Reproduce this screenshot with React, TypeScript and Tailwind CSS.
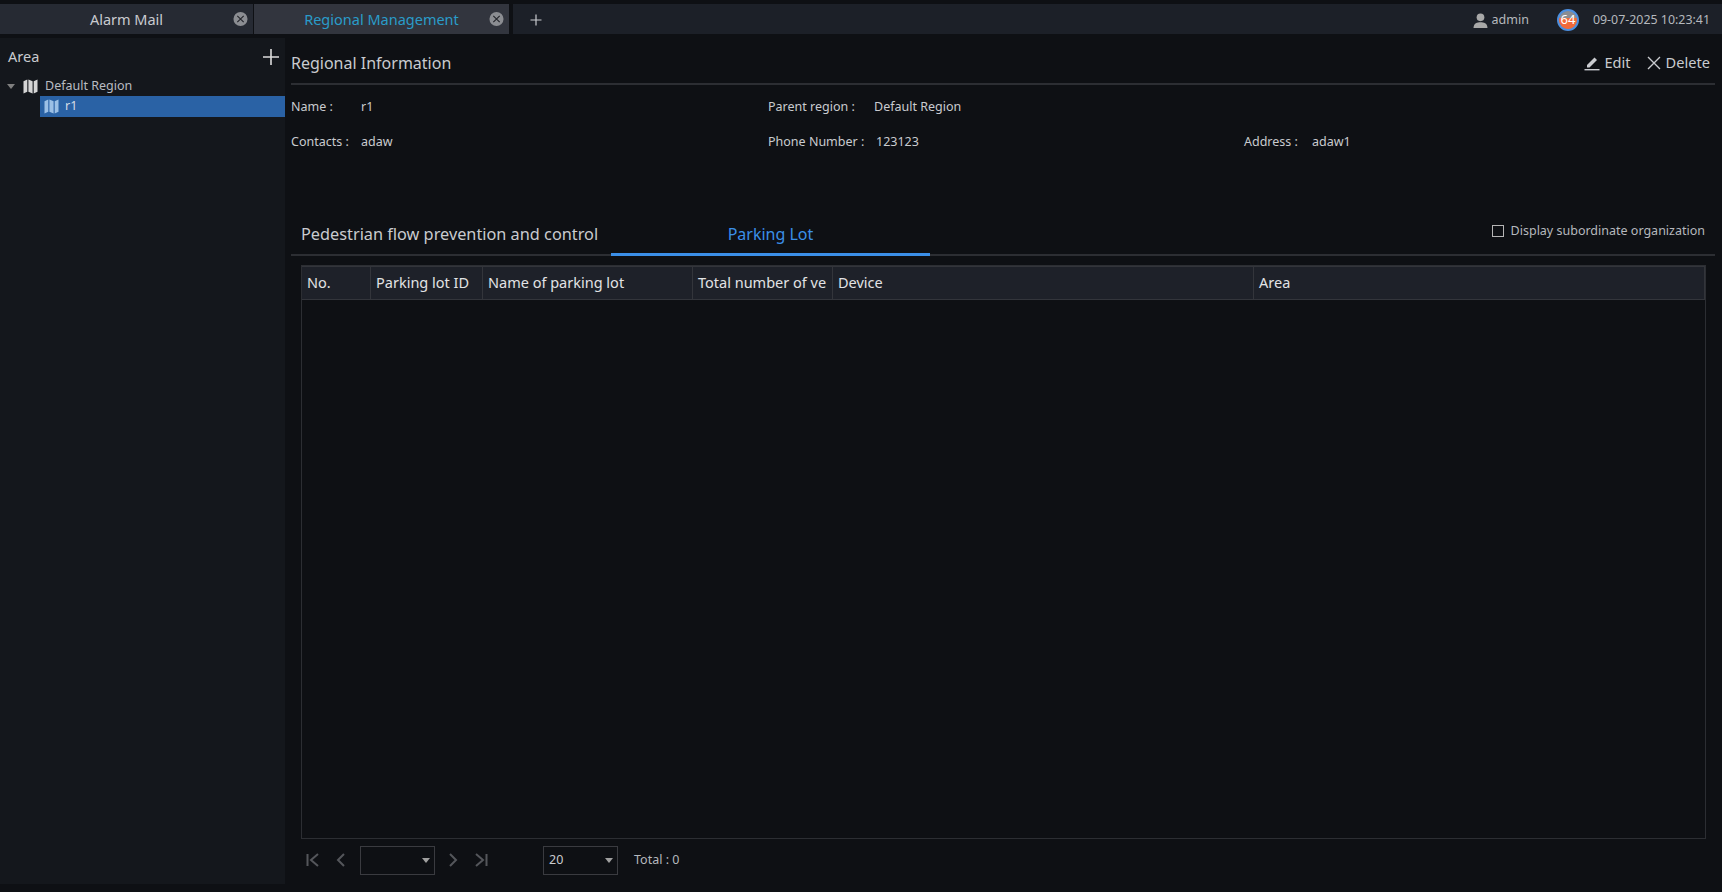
import React from 'react';

const MapIcon = ({ className }: { className?: string }) => (
  <svg viewBox="0 0 15 15" className={className} fill="currentColor">
    <path d="M0.5 2.2 L4.3 0.6 V12.8 L0.5 14.4 Z" />
    <path d="M5.4 0.6 L9.6 2.2 V14.4 L5.4 12.8 Z" />
    <path d="M10.7 2.2 L14.5 0.6 V12.8 L10.7 14.4 Z" />
  </svg>
);

const CloseBadge = () => (
  <svg viewBox="0 0 16 16" className="absolute right-[5px] top-1/2 -translate-y-1/2 w-[15px] h-[15px]">
    <circle cx="8" cy="8" r="7.5" fill="#8b8d92" />
    <path d="M4.6 4.6 L11.4 11.4 M11.4 4.6 L4.6 11.4" stroke="#26282e" strokeWidth="1.3" />
  </svg>
);

const Caret = ({ fill = '#a0a0a0' }: { fill?: string }) => (
  <svg viewBox="0 0 8 5" className="w-2 h-[5px]" fill={fill}>
    <path d="M0 0 H8 L4 5 Z" />
  </svg>
);

const Pager = ({ d }: { d: string }) => (
  <svg viewBox="0 0 16 16" className="w-4 h-4" fill="none" stroke="#54565b" strokeWidth="2">
    <path d={d} />
  </svg>
);

const columns = [
  { label: 'No.', width: 'w-[69px]' },
  { label: 'Parking lot ID', width: 'w-[112px]' },
  { label: 'Name of parking lot', width: 'w-[210px]' },
  { label: 'Total number of ve', width: 'w-[140px]' },
  { label: 'Device', width: 'w-[421px]' },
  { label: 'Area', width: 'flex-1' },
];

const App: React.FC = () => {
  return (
    <div className="w-[1722px] h-[892px] overflow-hidden bg-[#0e1014] flex flex-col text-[#c9cbcf] font-['Noto_Sans','Open_Sans',sans-serif] text-[12.5px]">
      {/* Tab bar */}
      <div className="h-[30px] mt-[4px] bg-[#1c2028] flex items-stretch shrink-0">
        <div className="relative w-[253px] bg-[#262a33] flex items-center justify-center pt-[2px]">
          <span className="text-[14.5px] text-[#c9cbcf]">Alarm Mail</span>
          <CloseBadge />
        </div>
        <div className="w-[1px] bg-[#0e1014]" />
        <div className="relative w-[255px] bg-[#32353e] flex items-center justify-center pt-[2px]">
          <span className="text-[14.5px] text-[#2a9cc9]">Regional Management</span>
          <CloseBadge />
        </div>
        <div className="w-[4px] bg-[#0e1014]" />
        <div className="w-[46px] flex items-center justify-center pt-[2px]">
          <svg viewBox="0 0 12 12" className="w-3 h-3" stroke="#c9cbcf" strokeWidth="1.2">
            <path d="M6 0.5 V11.5 M0.5 6 H11.5" />
          </svg>
        </div>
        <div className="flex-1 flex items-center justify-end pr-[12px] pt-[2px]">
          <svg viewBox="0 0 14 14" className="w-[15px] h-[15px] mr-[4px]" fill="#a8a8a8">
            <circle cx="7" cy="4" r="3.6" />
            <path d="M0.5 14 C0.5 9.5 4 8.6 7 8.6 C10 8.6 13.5 9.5 13.5 14 Z" />
          </svg>
          <span className="text-[#b5b8bd]">admin</span>
          <div className="relative ml-[28px] w-[22px] h-[22px] rounded-full border-2 border-[#4b8fe0] bg-[#8a8d92] overflow-hidden">
            <div className="absolute left-0 right-0 bottom-0 h-[11px] bg-[#f0693a]" />
            <span className="absolute inset-0 flex items-center justify-center text-[13px] text-white">64</span>
          </div>
          <span className="ml-[14px] text-[12.4px] text-[#b5b8bd]">09-07-2025 10:23:41</span>
        </div>
      </div>

      <div className="flex flex-1 pt-[4px] min-h-0">
        {/* Area tree */}
        <aside className="w-[285px] h-[846px] bg-[#14171c] shrink-0 pt-[1px]">
          <div className="h-[37px] flex items-center justify-between pl-2 pr-[6px] pb-[2px]">
            <span className="text-[14.5px] text-[#c9cbcf]">Area</span>
            <svg viewBox="0 0 16 16" className="w-4 h-4" stroke="#dcdcdc" strokeWidth="1.6">
              <path d="M8 0 V16 M0 8 H16" />
            </svg>
          </div>
          <div className="h-[20px] flex items-center pl-[7px]">
            <Caret fill="#7f7f7f" />
            <MapIcon className="w-[15px] h-[15px] ml-[8px] text-[#d5d5d5]" />
            <span className="ml-[7px] text-[#b9bcc1]">Default Region</span>
          </div>
          <div className="ml-[40px] h-[21px] bg-[#2a62a5] flex items-center pl-[4px]">
            <MapIcon className="w-[15px] h-[15px] text-[#9cc0e6]" />
            <span className="ml-[6px] text-[#d5dde6]">r1</span>
          </div>
        </aside>

        {/* Regional information */}
        <main className="flex-1 min-w-0 flex flex-col pl-[6px] pr-[7px]">
          <div className="h-[47px] flex items-center justify-between border-b-2 border-[#2c2e33] pt-[5px] pr-[5px]">
            <span className="text-base text-[#c9cbcf]">Regional Information</span>
            <div className="flex items-center text-[14.6px] text-[#c9cbcf]">
              <svg viewBox="0 0 16 16" className="w-[16px] h-[16px] mr-[4px]" fill="#c9cbcf">
                <path d="M3 10 L10.5 2.5 L13 5 L5.5 12.5 H3 Z" />
                <rect x="0.5" y="14" width="15" height="1.4" />
              </svg>
              <span>Edit</span>
              <svg viewBox="0 0 14 14" className="w-[14px] h-[14px] ml-[16px] mr-[5px]" stroke="#c9cbcf" strokeWidth="1.4">
                <path d="M1 1 L13 13 M13 1 L1 13" />
              </svg>
              <span>Delete</span>
            </div>
          </div>

          <div className="grid grid-cols-[477px_476px_1fr] grid-rows-[35px_35px] mt-[5px] h-[70px] items-center">
            <div className="flex"><span className="w-[70px]">Name :</span><span>r1</span></div>
            <div className="flex"><span className="w-[106px]">Parent region :</span><span>Default Region</span></div>
            <div />
            <div className="flex"><span className="w-[70px]">Contacts :</span><span>adaw</span></div>
            <div className="flex"><span className="w-[108px]">Phone Number :</span><span>123123</span></div>
            <div className="flex"><span className="w-[68px]">Address :</span><span>adaw1</span></div>
          </div>

          {/* Tabs */}
          <div className="mt-[57px] h-[39px] flex items-stretch border-b-2 border-[#2c2e33] text-[16.3px]">
            <div className="w-[320px] pl-[10px] pb-[2px] flex items-center text-[#c9cbcf]">Pedestrian flow prevention and control</div>
            <div className="w-[319px] pb-[2px] flex items-center justify-center text-[#3b8fe8] border-b-[3px] border-[#3b8fe8] -mb-[2px] text-base">Parking Lot</div>
            <div className="flex-1 flex items-start justify-end pt-[5px] pr-[10px]">
              <div className="w-3 h-3 mt-[3px] border border-[#b5b5b5] mr-[7px]" />
              <span className="text-[12.5px] text-[#b5b8bd]">Display subordinate organization</span>
            </div>
          </div>

          {/* Table */}
          <div className="ml-[10px] mr-[9px] mt-[9px] h-[574px] border border-[#2c2e33] flex flex-col">
            <div className="h-[34px] bg-[#1e2129] border-t border-[#33353b] border-b flex text-[14.5px] text-[#e2e3e5] shrink-0">
              {columns.map((col) => (
                <div key={col.label} className={`${col.width} flex items-center pl-[5px] border-r border-[#33353b] whitespace-nowrap overflow-hidden`}>
                  {col.label}
                </div>
              ))}
            </div>
          </div>

          {/* Pagination */}
          <div className="ml-[14px] mt-[6px] h-[30px] flex items-center">
            <Pager d="M2.5 2 V14 M13 2 L6 8 L13 14" />
            <div className="w-[12px]" />
            <Pager d="M11 2 L5 8 L11 14" />
            <div className="ml-[11px] w-[75px] h-[29px] border border-[#3a3b40] flex items-center justify-end pr-[4px]"><Caret /></div>
            <div className="w-[10px]" />
            <Pager d="M5 2 L11 8 L5 14" />
            <div className="w-[12px]" />
            <Pager d="M3 2 L10 8 L3 14 M13.5 2 V14" />
            <div className="ml-[54px] w-[75px] h-[29px] border border-[#3a3b40] flex items-center justify-between pl-[5px] pr-[4px]">
              <span className="text-[#c9cbcf]">20</span>
              <Caret />
            </div>
            <span className="ml-[16px] text-[#b5b8bd]">Total : 0</span>
          </div>
        </main>
      </div>
    </div>
  );
};

export default App;
